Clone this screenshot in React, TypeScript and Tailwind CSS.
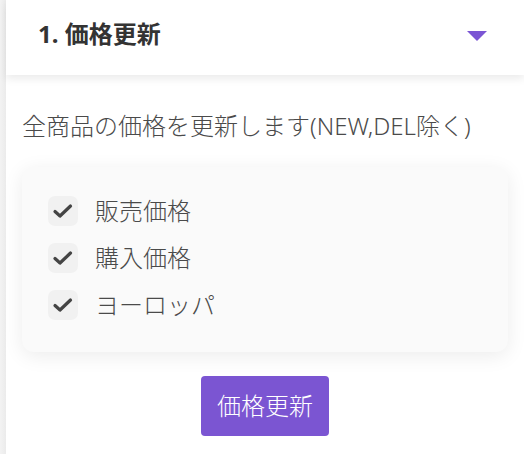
const font = { fontFamily: '"Noto Sans", "Noto Sans CJK JP", sans-serif' };

const items = ["販売価格", "購入価格", "ヨーロッパ"];

function CheckItem({ label }: { label: string }) {
  return (
    <label className="flex h-[47px] items-center gap-[17px]">
      <span className="flex h-[30px] w-[30px] items-center justify-center rounded-[7px] bg-[#f1f1f1]">
        <svg width="22" height="16" viewBox="0 0 22 16" fill="none">
          <path d="M3 8.5 L8 13 L18.5 3" stroke="#444" strokeWidth="3.2" strokeLinecap="round" strokeLinejoin="round" />
        </svg>
      </span>
      <span className="text-[24px] font-light leading-[32px] text-[#4a4a4a]">{label}</span>
    </label>
  );
}

export default function App() {
  return (
    <div className="flex h-[454px] w-[524px] overflow-hidden bg-white" style={font}>
      <div className="w-[6px] shrink-0 bg-gradient-to-r from-[#f3f3f3] to-[#ebebeb]" />
      <div className="flex flex-1 flex-col">
        <div className="relative z-10 flex h-[75px] items-center justify-between bg-white pb-[8px] pl-[32px] pr-[37px] shadow-[0_4px_8px_rgba(0,0,0,0.08)]">
          <h2 className="text-[24px] font-bold leading-[32px] text-[#333]">1. 価格更新</h2>
          <span className="mt-[4px] h-0 w-0 border-x-[10px] border-t-[10px] border-x-transparent border-t-[#7b55d4]" />
        </div>

        <div className="flex flex-col px-[16px]">
          <p className="mt-[35px] text-[24px] font-light leading-[32px] text-[#4a4a4a]">全商品の価格を更新します(NEW,DEL除く)</p>

          <div className="mt-[25px] rounded-[12px] bg-[#fafafa] pb-[24px] pl-[26px] pt-[20px] shadow-[0_4px_20px_rgba(0,0,0,0.08)]">
            {items.map((it) => (
              <CheckItem key={it} label={it} />
            ))}
          </div>

          <div className="mt-[24px] flex justify-center">
            <button className="h-[60px] w-[128px] rounded-[4px] bg-[#7b55d2] text-[24px] font-light text-white">
              価格更新
            </button>
          </div>
        </div>
      </div>
    </div>
  );
}
